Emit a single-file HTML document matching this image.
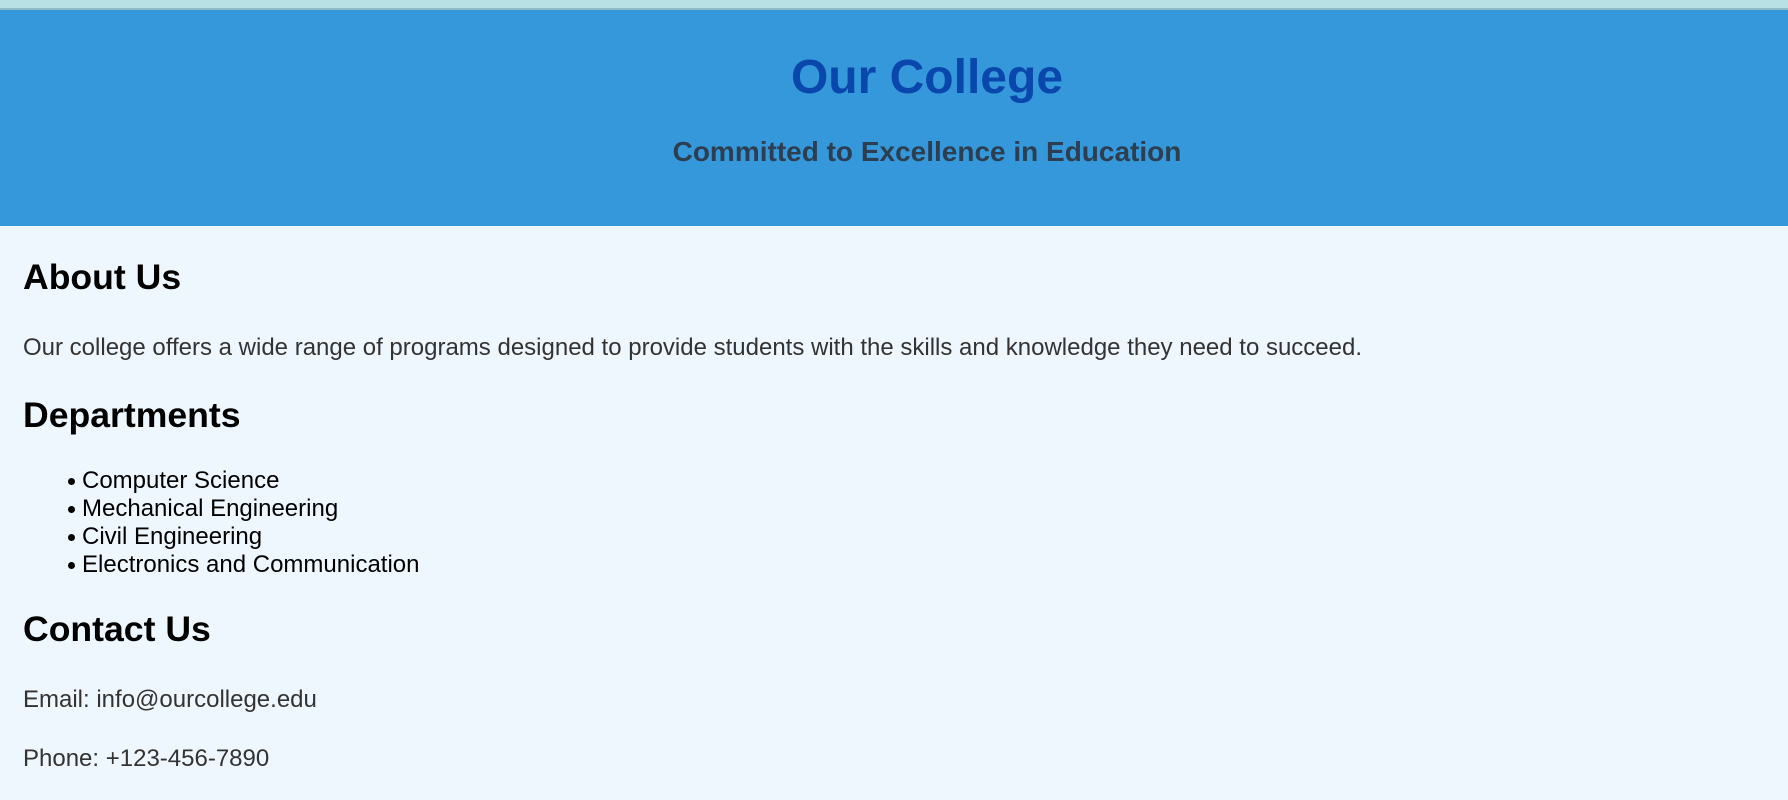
<!DOCTYPE html>
<html><head><meta charset="utf-8"><style>
html,body{margin:0;padding:0;width:1788px;height:800px;overflow:hidden;background:#eff7fe;font-family:"Liberation Sans",Arial,sans-serif;}
.abs{position:absolute;white-space:nowrap;}
.top{position:absolute;left:0;top:0;width:1788px;height:8px;background:#b7e1e4;border-bottom:2px solid #8fbcc4;}
.hdr{position:absolute;left:0;top:10px;width:1788px;height:216px;background:#3598db;}
.t{left:33px;width:1788px;text-align:center;}
.h2{font-size:35.6px;font-weight:bold;color:#000;left:23px;line-height:40px;}
.p{font-size:24px;color:#333;left:23px;line-height:28px;}
.li{font-size:24px;color:#000;left:82px;line-height:28px;}
.li::before{content:"";position:absolute;left:-14px;top:11px;width:7px;height:7px;border-radius:50%;background:#000;}
</style></head><body>
<div class="top"></div>
<div class="hdr"></div>
<div class="abs t" style="top:50px;font-size:48px;font-weight:bold;color:#0a47ad;line-height:56px;">Our College</div>
<div class="abs t" style="top:136px;font-size:28px;font-weight:bold;color:#2c3e50;line-height:32px;">Committed to Excellence in Education</div>
<div class="abs h2" style="top:257px;">About Us</div>
<div class="abs p" style="top:334px;">Our college offers a wide range of programs designed to provide students with the skills and knowledge they need to succeed.</div>
<div class="abs h2" style="top:395px;">Departments</div>
<div class="abs li" style="top:467px;">Computer Science</div>
<div class="abs li" style="top:495px;">Mechanical Engineering</div>
<div class="abs li" style="top:523px;">Civil Engineering</div>
<div class="abs li" style="top:551px;">Electronics and Communication</div>
<div class="abs h2" style="top:609px;">Contact Us</div>
<div class="abs p" style="top:686px;">Email: info@ourcollege.edu</div>
<div class="abs p" style="top:745px;">Phone: +123-456-7890</div>
</body></html>
